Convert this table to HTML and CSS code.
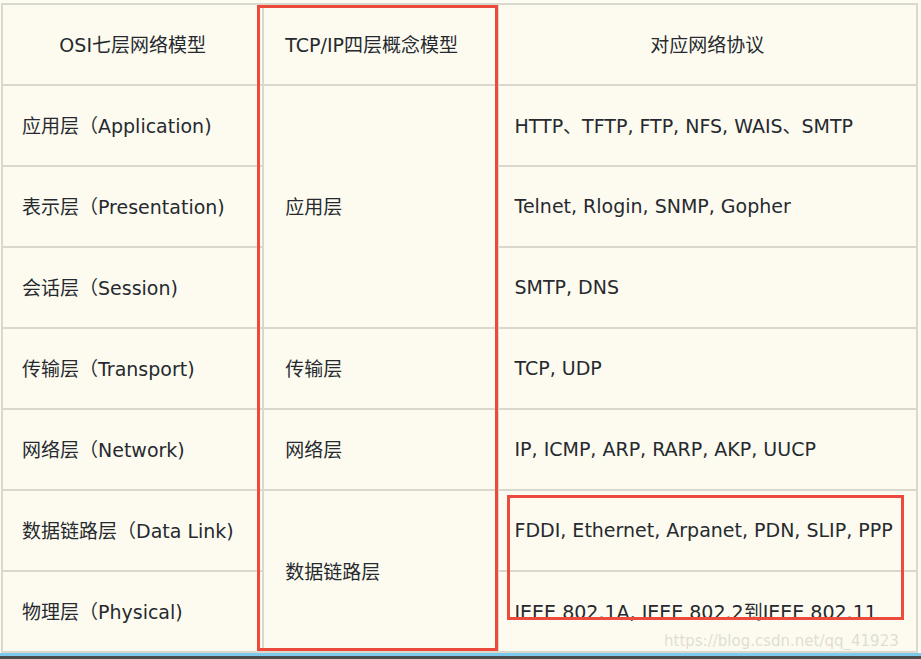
FILE: index.html
```html
<!DOCTYPE html>
<html lang="zh">
<head>
<meta charset="utf-8">
<title>OSI vs TCP/IP</title>
<link rel="stylesheet" href="styles.css">
</head>
<body>
<div class="page">
  <div class="stage">
    <table class="osi">
      <colgroup>
        <col class="c1"><col class="c2"><col class="c3">
      </colgroup>
      <tr class="head">
        <th>OSI七层网络模型</th>
        <th class="left">TCP/IP四层概念模型</th>
        <th>对应网络协议</th>
      </tr>
      <tr>
        <td class="a">应用层（Application)</td>
        <td class="b" rowspan="3">应用层</td>
        <td class="p">HTTP、TFTP, FTP, NFS, WAIS、SMTP</td>
      </tr>
      <tr>
        <td class="a">表示层（Presentation)</td>
        <td class="p">Telnet, Rlogin, SNMP, Gopher</td>
      </tr>
      <tr>
        <td class="a">会话层（Session)</td>
        <td class="p">SMTP, DNS</td>
      </tr>
      <tr>
        <td class="a">传输层（Transport)</td>
        <td class="b">传输层</td>
        <td class="p">TCP, UDP</td>
      </tr>
      <tr>
        <td class="a">网络层（Network)</td>
        <td class="b">网络层</td>
        <td class="p">IP, ICMP, ARP, RARP, AKP, UUCP</td>
      </tr>
      <tr>
        <td class="a">数据链路层（Data Link)</td>
        <td class="b" rowspan="2">数据链路层</td>
        <td class="p">FDDI, Ethernet, Arpanet, PDN, SLIP, PPP</td>
      </tr>
      <tr>
        <td class="a">物理层（Physical)</td>
        <td class="p">IEEE 802.1A, IEEE 802.2到IEEE 802.11</td>
      </tr>
    </table>
    <div class="mark mark-tcp"></div>
    <div class="mark mark-link"></div>
    <div class="watermark">https://blog.csdn.net/qq_41923</div>
  </div>
  <div class="bar-blue"></div>
  <div class="bar-dark"></div>
</div>
</body>
</html>
```
FILE: styles.css
```css
html, body {
  margin: 0;
  padding: 0;
  background: #fdfcf3;
}
.page {
  width: 921px;
  height: 659px;
  display: flex;
  flex-direction: column;
  overflow: hidden;
}
.stage {
  position: relative;
  flex: 1;
  padding: 3px 0 0 1px;
}
.osi {
  border-collapse: collapse;
  width: 917px;
  background: #fdfbef;
  font-family: "DejaVu Sans", "Noto Sans CJK SC", sans-serif;
  font-size: 19px;
  color: #262a30;
  border: 2px solid #dad8cd;
}
.osi col.c1 { width: 262px; }
.osi col.c2 { width: 235px; }
.osi col.c3 { width: 420px; }
.osi th, .osi td {
  box-sizing: border-box;
  border: 2px solid #dad8cd;
  height: 81px;
  padding: 0 0 2px 0;
  vertical-align: middle;
  font-weight: normal;
  white-space: nowrap;
}
.osi th { text-align: center; }
.osi th.left { text-align: left; padding-left: 21px; }
.osi td.a { padding-left: 19px; }
.osi td.b { padding-left: 21px; }
.osi td.p { padding-left: 16px; }
.mark {
  position: absolute;
  border: 3px solid #eb4a3c;
  pointer-events: none;
}
.mark-tcp {
  left: 257px;
  top: 5px;
  width: 235px;
  height: 640px;
}
.mark-link {
  left: 507px;
  top: 495px;
  width: 391px;
  height: 119px;
}
.watermark {
  position: absolute;
  left: 664px;
  top: 632px;
  font-family: "DejaVu Sans", sans-serif;
  font-size: 15px;
  color: rgba(190, 190, 190, 0.5);
  white-space: nowrap;
}
.bar-blue {
  height: 3px;
  background: #7ccbec;
  flex: none;
}
.bar-dark {
  height: 3px;
  background: #4b4b4b;
  flex: none;
}
```
